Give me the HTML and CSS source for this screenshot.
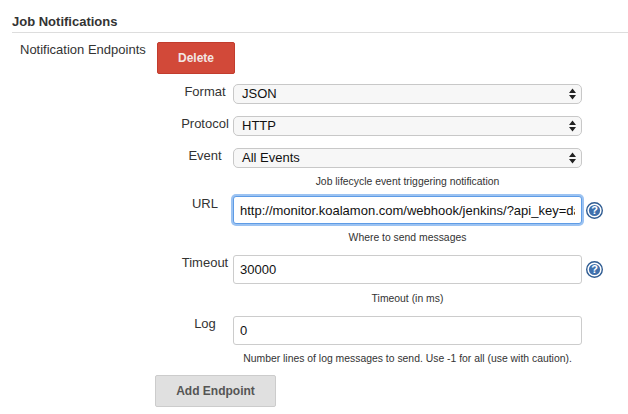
FILE: index.html
```html
<!DOCTYPE html>
<html lang="en">
<head>
    <meta charset="UTF-8">
    <title>Job Notifications</title>
    <link rel="stylesheet" href="styles.css">
</head>
<body>
    <div class="section">
        <h2 class="sectionTitle">Job Notifications</h2>
    </div>
    <div class="endpoints">
        <div class="endpointsLabel">Notification Endpoints</div>
        <div class="endpointsBody">
            <button class="btn btnDelete" type="button">Delete</button>
        </div>
    </div>

    <!-- Endpoint fields -->
    <div class="fields">
        <div class="row rowFormat">
            <label class="fieldLabel">Format</label>
            <div class="selectBox">JSON<svg class="arrows" width="7" height="12" viewBox="0 0 7 12"><path d="M3.5 0.5 7 5H0zM0 7h7l-3.5 4.5z"/></svg></div>
        </div>
        <div class="row rowProtocol">
            <label class="fieldLabel">Protocol</label>
            <div class="selectBox">HTTP<svg class="arrows" width="7" height="12" viewBox="0 0 7 12"><path d="M3.5 0.5 7 5H0zM0 7h7l-3.5 4.5z"/></svg></div>
        </div>
        <div class="row rowEvent">
            <label class="fieldLabel">Event</label>
            <div class="selectBox">All Events<svg class="arrows" width="7" height="12" viewBox="0 0 7 12"><path d="M3.5 0.5 7 5H0zM0 7h7l-3.5 4.5z"/></svg></div>
        </div>
        <div class="help helpEvent">Job lifecycle event triggering notification</div>

        <div class="row rowUrl">
            <label class="fieldLabel">URL</label>
            <input class="textBox textFocus" type="text" value="http://monitor.koalamon.com/webhook/jenkins/?api_key=da39a3ee5e6b4b0d">
            <svg class="helpIcon" width="17" height="17" viewBox="0 0 17 17"><circle cx="8.5" cy="8.5" r="7.8" fill="#fff" stroke="#2f5c92" stroke-width="1.4"/><circle cx="8.5" cy="8.5" r="5.6" fill="#3f70ad"/><text class="helpMark" x="8.5" y="12.4" text-anchor="middle">?</text></svg>
        </div>
        <div class="help helpUrl">Where to send messages</div>

        <div class="row rowTimeout">
            <label class="fieldLabel">Timeout</label>
            <input class="textBox" type="text" value="30000">
            <svg class="helpIcon" width="17" height="17" viewBox="0 0 17 17"><circle cx="8.5" cy="8.5" r="7.8" fill="#fff" stroke="#2f5c92" stroke-width="1.4"/><circle cx="8.5" cy="8.5" r="5.6" fill="#3f70ad"/><text class="helpMark" x="8.5" y="12.4" text-anchor="middle">?</text></svg>
        </div>
        <div class="help helpTimeout">Timeout (in ms)</div>

        <div class="row rowLog">
            <label class="fieldLabel">Log</label>
            <input class="textBox" type="text" value="0">
        </div>
        <div class="help helpLog">Number lines of log messages to send. Use -1 for all (use with caution).</div>
    </div>

    <button class="btn btnAdd" type="button">Add Endpoint</button>
</body>
</html>
```

FILE: styles.css
```css
body {
    margin: 0;
    background-color: #fff;
    color: #333;
    font-family: "Liberation Sans", Arial, sans-serif;
    font-size: 13px;
    overflow: hidden;
}
.section {
    margin-left: 12px;
    padding-top: 14px;
    height: 18px;
    border-bottom: 1px solid #ddd;
}
.sectionTitle {
    margin: 0;
    font-size: 13px;
    line-height: 15px;
    font-weight: bold;
}
.endpoints {
    display: flex;
    margin-top: 9px;
}
.endpointsLabel {
    width: 137px;
    margin-left: 20px;
    line-height: 16px;
}
.btn {
    display: block;
    font-family: "Liberation Sans", Arial, sans-serif;
    font-weight: bold;
    font-size: 12px;
    border-radius: 2px;
    padding: 0;
}
.btnDelete {
    width: 78px;
    height: 32px;
    background-color: #d24939;
    border: 1px solid #c23c2d;
    color: #f3e6e4;
}
.fields {
    width: 628px;
}
.row {
    display: flex;
    align-items: flex-start;
}
.rowFormat {
    margin-top: 10px;
}
.rowProtocol, .rowEvent {
    margin-top: 12px;
}
.rowUrl {
    margin-top: 8px;
}
.rowTimeout {
    margin-top: 11px;
}
.rowLog {
    margin-top: 11px;
}
.fieldLabel {
    width: 60px;
    margin-left: 175px;
    margin-right: -2px;
    flex: none;
    text-align: center;
    line-height: 16px;
}
.selectBox {
    width: 349px;
    height: 20px;
    box-sizing: border-box;
    display: flex;
    align-items: center;
    justify-content: space-between;
    padding: 0 5px 0 8px;
    background-color: #f7f7f7;
    border: 1px solid #c8c8c8;
    border-radius: 5px;
    color: #111;
    line-height: 18px;
}
.arrows {
    fill: #222;
}
.textBox {
    width: 349px;
    height: 29px;
    box-sizing: border-box;
    padding: 0 6px;
    border: 1px solid #ccc;
    border-radius: 3px;
    font-family: "Liberation Sans", Arial, sans-serif;
    font-size: 13px;
    color: #111;
    outline: none;
}
.textFocus {
    height: 28px;
    border-color: #5e9ce6;
    box-shadow: 0 0 0 2px #9cc3f2;
}
.helpIcon {
    margin-left: 4px;
    margin-top: 6px;
    flex: none;
}
.helpMark {
    font-family: "Liberation Sans", Arial, sans-serif;
    font-size: 11px;
    font-weight: bold;
    fill: #fff;
}
.help {
    margin-left: 233px;
    width: 349px;
    font-size: 10.4px;
    line-height: 13px;
    text-align: center;
    color: #333;
    white-space: nowrap;
    margin-top: 7px;
}
.helpTimeout {
    margin-top: 8px;
}
.btnAdd {
    width: 121px;
    height: 32px;
    margin-top: 10px;
    margin-left: 155px;
    background-color: #e0e0e0;
    border: 1px solid #ccc;
    color: #555;
}
```
